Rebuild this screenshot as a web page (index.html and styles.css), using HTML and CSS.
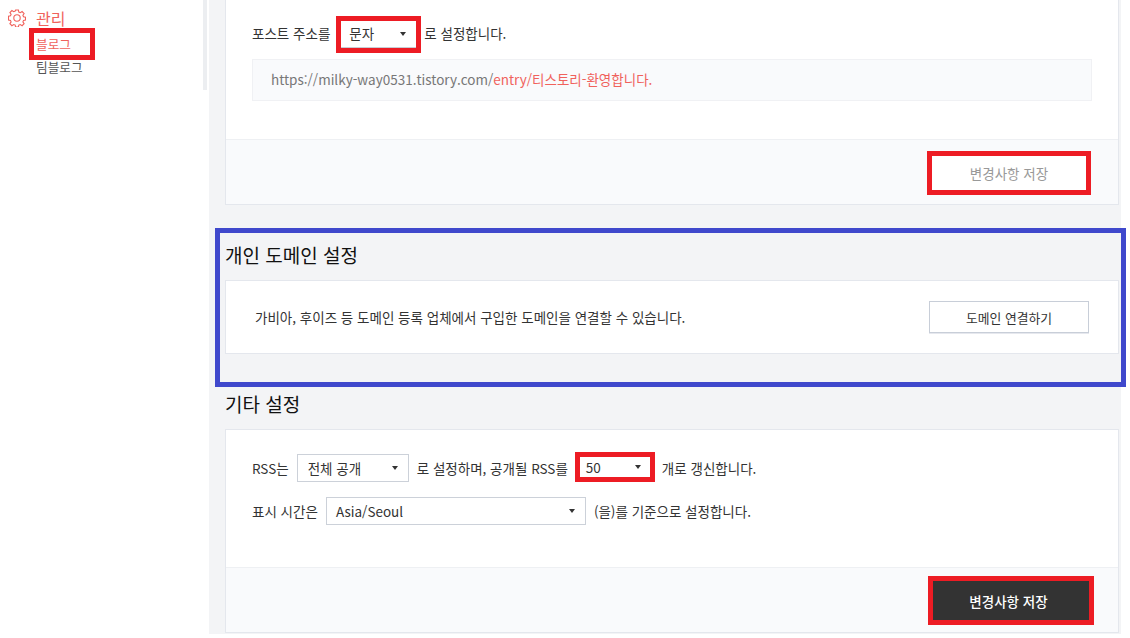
FILE: index.html
```html
<!DOCTYPE html>
<html lang="ko">
<head>
  <meta charset="UTF-8">
  <meta name="viewport" content="width=device-width, initial-scale=1.0">
  <title>블로그 관리</title>
  <link rel="stylesheet" href="styles.css">
</head>
<body>
  <aside class="sidebar">
    <div class="menu-title">
      <svg class="gear" viewBox="0 0 18 18" width="18" height="18" fill="none" stroke="#f0625c" stroke-width="1.1">
        <path d="M7.6 1h2.8l.4 2.1 1.5.6 1.8-1.2 2 2-1.2 1.8.6 1.5 2 .4v2.8l-2 .4-.6 1.5 1.2 1.8-2 2-1.8-1.2-1.5.6-.4 2H7.6l-.4-2-1.5-.6-1.8 1.2-2-2 1.2-1.8-.6-1.5-2-.4V7.200l2-.4.6-1.500-1.200-1.800 2-2 1.800 1.200 1.500-.6z"/>
        <circle cx="9" cy="9" r="3.200"/>
      </svg>
      <span>관리</span>
    </div>
    <ul class="submenu">
      <li class="active">블로그</li>
      <li>팀블로그</li>
    </ul>
    <div class="side-scroll"></div>
  </aside>

  <main class="content">
    <section class="card card-top">
      <div class="card-body">
        <div class="row">
          포스트 주소를
          <div class="select select-flat mark">문자<i class="caret"></i></div>
          로 설정합니다.
        </div>
        <div class="url-box">https://milky-way0531.tistory.com/<span class="accent">entry/티스토리-환영합니다.</span></div>
      </div>
      <div class="card-foot">
        <button class="btn btn-off mark">변경사항 저장</button>
      </div>
    </section>

    <section class="domain">
      <h3>개인 도메인 설정</h3>
      <div class="card domain-card">
        <p>가비아, 후이즈 등 도메인 등록 업체에서 구입한 도메인을 연결할 수 있습니다.</p>
        <button class="btn btn-line">도메인 연결하기</button>
      </div>
      <div class="blue-mark"></div>
    </section>

    <section class="etc">
      <h3>기타 설정</h3>
      <div class="card">
        <div class="card-body etc-body">
          <div class="row">
            RSS는
            <div class="select select-rss">전체 공개<i class="caret"></i></div>
            로 설정하며, 공개될 RSS를
            <div class="select select-count mark">50<i class="caret"></i></div>
            개로 갱신합니다.
          </div>
          <div class="row">
            표시 시간은
            <div class="select select-zone">Asia/Seoul<i class="caret"></i></div>
            (을)를 기준으로 설정합니다.
          </div>
        </div>
        <div class="card-foot">
          <button class="btn btn-dark mark">변경사항 저장</button>
        </div>
      </div>
    </section>
  </main>
</body>
</html>
```

FILE: styles.css
```css
html, body {
  height: 100%;
}
body {
  margin: 0;
  display: flex;
  overflow: hidden;
  background: #fff;
  color: #333;
  font-family: "Noto Sans CJK KR", "Noto Sans", sans-serif;
  font-size: 13.5px;
}
h3 {
  margin: 0;
  font-size: 19px;
  font-weight: 400;
  color: #111;
}

/* sidebar */
.sidebar {
  position: relative;
  width: 209px;
  flex-shrink: 0;
}
.menu-title {
  display: flex;
  align-items: center;
  gap: 10px;
  padding: 7px 0 0 8px;
  height: 21px;
  font-size: 16px;
  color: #f0625c;
}
.submenu {
  list-style: none;
  margin: 7px 0 0 36px;
  padding: 0;
  font-size: 12.7px;
  line-height: 18px;
  color: #555;
}
.submenu li {
  height: 23px;
}
.submenu .active {
  color: #f0625c;
}
.submenu .active::after {
  content: "";
  position: absolute;
  left: 29px;
  top: 28px;
  width: 56px;
  height: 22px;
  border: 5px solid #ed1c24;
}
.side-scroll {
  position: absolute;
  top: 0;
  left: 203px;
  width: 4px;
  height: 90px;
  background: #eceef1;
}

/* main column */
.content {
  width: 894px;
  height: 634px;
  padding: 0 2px 0 16px;
  background: #f3f4f6;
  flex-shrink: 0;
}
.card {
  background: #fff;
  border: 1px solid #e4e7ed;
}
.card-top {
  height: 205px;
  border-top: 0;
  box-sizing: border-box;
}
.card-body {
  height: 139px;
  padding: 0 26px;
  box-sizing: border-box;
}
.card-foot {
  display: flex;
  justify-content: flex-end;
  box-sizing: border-box;
  height: 65px;
  padding: 16px 32px 0 0;
  background: #f9fafc;
  border-top: 1px solid #eef0f3;
}
.row {
  display: flex;
  align-items: center;
  gap: 8px;
  height: 28px;
  white-space: nowrap;
}
.card-top .row {
  padding-top: 19px;
}
.url-box {
  box-sizing: border-box;
  height: 42px;
  margin-top: 12px;
  padding-left: 18px;
  background: #f9fafc;
  border: 1px solid #f0f1f4;
  color: #777;
  line-height: 38px;
}
.accent {
  color: #f0625c;
}

/* selects */
.select {
  position: relative;
  box-sizing: border-box;
  height: 28px;
  padding-left: 10px;
  background: #fff;
  border: 1px solid #ccd1d9;
  line-height: 26px;
  color: #333;
}
.caret {
  position: absolute;
  right: 10px;
  top: 11px;
  border: 3px solid transparent;
  border-top: 4px solid #333;
  border-bottom: 0;
}
.select-flat {
  width: 75px;
  height: 27px;
  margin: 3px 0 0 3px;
  padding-left: 8px;
  border: 0;
  border-bottom: 1px solid #c8ccd4;
  line-height: 24px;
}
.select-rss {
  width: 112px;
}
.select-count {
  width: 70px;
  height: 20px;
  margin: 0 4px 2px;
  padding-left: 6px;
  border: 0;
  line-height: 20px;
}
.select-count .caret {
  top: 8px;
  right: 9px;
}
.select-zone {
  width: 260px;
  padding-left: 9px;
}

/* buttons */
.btn {
  box-sizing: border-box;
  height: 32px;
  background: #fff;
  border: 0;
  font: inherit;
  cursor: pointer;
}
.btn-off {
  width: 154px;
  height: 34px;
  color: #999;
}
.btn-line {
  width: 160px;
  font-size: 12.8px;
  color: #333;
  border: 1px solid #c8ced8;
  box-shadow: 0 1px 0 #e6e8ee;
}
.btn-dark {
  width: 156px;
  height: 39px;
  margin: -3px -3px 0 0;
  padding-right: 11px;
  background: #333;
  color: #fff;
  font-weight: 500;
}
.mark {
  outline: 5px solid #ed1c24;
}

/* domain block */
.domain {
  position: relative;
  height: 180px;
}
.domain h3 {
  padding-top: 36px;
  height: 39px;
  line-height: 27px;
}
.domain-card {
  display: flex;
  align-items: center;
  justify-content: space-between;
  box-sizing: border-box;
  height: 74px;
  padding: 0 29px;
}
.domain-card p {
  margin: 0;
}
.blue-mark {
  position: absolute;
  left: -10px;
  right: -7px;
  top: 23px;
  height: 149px;
  border: 5px solid #3f48cc;
}

/* etc block */
.etc h3 {
  height: 44px;
  line-height: 38px;
}
.etc-body {
  padding-top: 24px;
  height: 137px;
}
.etc-body .row + .row {
  margin-top: 15px;
}
```
